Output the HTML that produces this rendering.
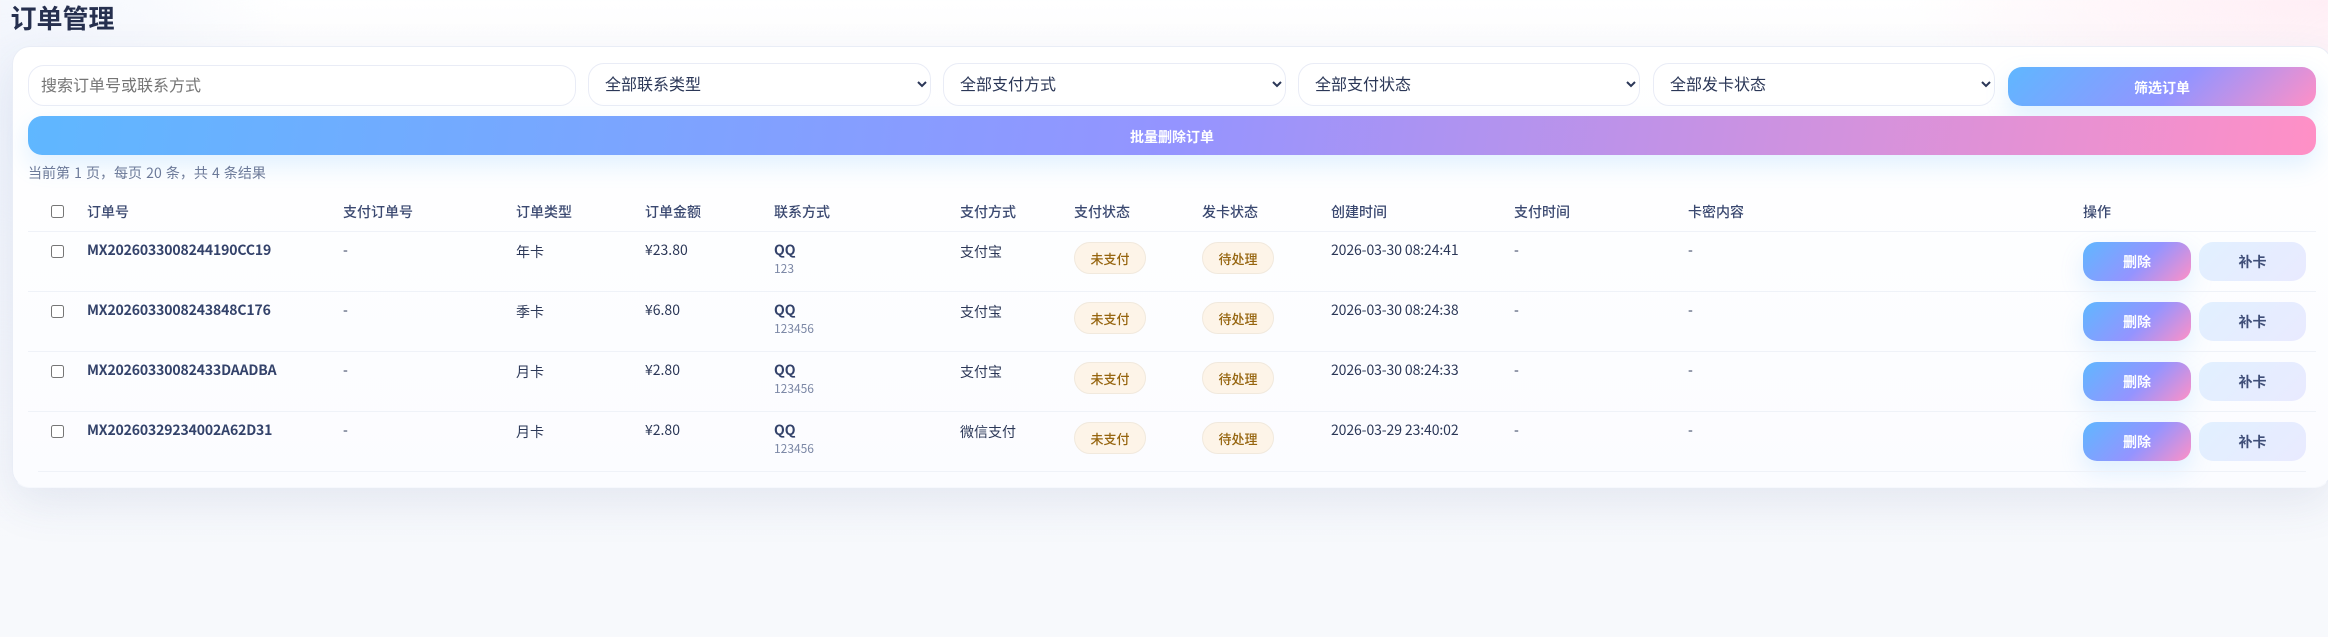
<!DOCTYPE html>
<html lang="zh-CN"><head><meta charset="utf-8"><title>订单管理</title>
<style>
*{box-sizing:border-box}
html,body{margin:0;padding:0;width:2328px;height:637px;overflow:hidden}
body{position:relative;font-family:"Noto Sans CJK SC","Liberation Sans",sans-serif;font-size:14px;color:#2b3757;
background:radial-gradient(ellipse 420px 130px at 2328px 0,#ffeef5 0,rgba(255,240,246,.6) 50%,rgba(255,255,255,0) 100%),radial-gradient(ellipse 300px 420px at 0 120px,#f0f4fc 0,rgba(240,244,252,0) 100%),linear-gradient(180deg,#fff 0,#fdfdfe 40px,#f8f9fd 300px,#f7f9fc 100%)}
h1{position:absolute;left:10.5px;top:0;margin:0;font-size:26px;line-height:36px;font-weight:700;color:#26304f}
.card{position:absolute;left:11.5px;top:46px;width:2320px;height:442px;border-radius:18px;border:1.5px solid #e9edf6;border-bottom-color:#f6f8fd;background:linear-gradient(180deg,#fff 0,#fbfcff 100%);box-shadow:0 16px 44px rgba(60,80,140,.10)}
.a{position:absolute;white-space:nowrap}
input.s,select{position:absolute;font-family:inherit;font-size:16px;background:#fff;border:1.5px solid #e9ecf6;border-radius:16px;color:#2b3757;outline:none;margin:0}
input.s{left:28px;top:65px;width:548px;height:41px;padding:0 12px 4px}
select{top:63px;height:43px;padding:0 12px 3px}
.g{background:linear-gradient(135deg,#5fb7ff 0,#9494ff 55%,#ff90c6 100%);color:#fff;font-weight:700;text-align:center;border-radius:14px;box-shadow:0 10px 24px rgba(90,175,255,.18)}
.b1{left:2008px;top:67px;width:308px;height:39px;line-height:42px}
.b2{left:28px;top:116px;width:2288px;height:39px;line-height:42px;background:linear-gradient(100deg,#5fb7ff 0,#9494ff 50%,#ff90c6 100%)}
.st{left:28px;top:163px;line-height:20px;color:#6c7a99;word-spacing:1px}
.th{top:202px;line-height:20px;font-weight:500;color:#3a4870}
.l{left:28px;width:2288px;height:1.5px;background:#eff2f8}
.c{position:absolute;margin:0;width:13px;height:13px;left:51px}
.o{left:87px;font-weight:700;color:#33426a;line-height:20px;letter-spacing:-.14px}
.d{line-height:20px;color:#2b3757}
.t{letter-spacing:-.1px}
.q{left:774px;font-weight:700;line-height:20px;color:#33426a}
.n{left:774px;font-size:12px;line-height:16px;color:#7c88a6}
.bd{width:72px;height:32px;line-height:32px;border:1.5px solid #f1e9dd;border-radius:16px;background:#fdf4e8;color:#96650f;font-size:13px;font-weight:500;text-align:center}
.del{left:2083px;width:108px;height:39px;line-height:41px;font-size:14px;background:linear-gradient(135deg,#5fb7ff 0,#9494ff 55%,#ff90c6 100%)}
.re{left:2199px;width:107px;height:39px;line-height:41px;border-radius:14px;text-align:center;font-weight:700;color:#3f4e78;background:linear-gradient(135deg,#e1f0ff 0,#e9eaff 100%)}
</style></head><body>
<h1>订单管理</h1>
<div class="card"></div>
<input class="s" placeholder="搜索订单号或联系方式">
<select style="left:588px;width:343px"><option>全部联系类型</option></select>
<select style="left:943px;width:343px"><option>全部支付方式</option></select>
<select style="left:1298px;width:342px"><option>全部支付状态</option></select>
<select style="left:1653px;width:342px"><option>全部发卡状态</option></select>
<div class="a g b1">筛选订单</div>
<div class="a g b2">批量删除订单</div>
<div class="a st">当前第 1 页，每页 20 条，共 4 条结果</div>

<input type="checkbox" class="c" style="top:205px">
<div class="a th" style="left:87px">订单号</div>
<div class="a th" style="left:343px">支付订单号</div>
<div class="a th" style="left:516px">订单类型</div>
<div class="a th" style="left:645px">订单金额</div>
<div class="a th" style="left:774px">联系方式</div>
<div class="a th" style="left:960px">支付方式</div>
<div class="a th" style="left:1074px">支付状态</div>
<div class="a th" style="left:1202px">发卡状态</div>
<div class="a th" style="left:1331px">创建时间</div>
<div class="a th" style="left:1514px">支付时间</div>
<div class="a th" style="left:1688px">卡密内容</div>
<div class="a th" style="left:2083px">操作</div>
<div class="a l" style="top:230.5px"></div>

<input type="checkbox" class="c" style="top:245px">
<div class="a o" style="top:240px">MX2026033008244190CC19</div>
<div class="a d" style="left:343px;top:240px">-</div>
<div class="a d" style="left:516px;top:242px">年卡</div>
<div class="a d" style="left:645px;top:240px">¥23.80</div>
<div class="a q" style="top:240px">QQ</div>
<div class="a n" style="top:261px">123</div>
<div class="a d" style="left:960px;top:242px">支付宝</div>
<div class="a bd" style="left:1074px;top:242px">未支付</div>
<div class="a bd" style="left:1202px;top:242px">待处理</div>
<div class="a d t" style="left:1331px;top:240px">2026-03-30 08:24:41</div>
<div class="a d" style="left:1514px;top:240px">-</div>
<div class="a d" style="left:1688px;top:240px">-</div>
<div class="a g del" style="top:242px">删除</div>
<div class="a re" style="top:242px">补卡</div>
<div class="a l" style="top:290.5px"></div>

<input type="checkbox" class="c" style="top:305px">
<div class="a o" style="top:300px">MX2026033008243848C176</div>
<div class="a d" style="left:343px;top:300px">-</div>
<div class="a d" style="left:516px;top:302px">季卡</div>
<div class="a d" style="left:645px;top:300px">¥6.80</div>
<div class="a q" style="top:300px">QQ</div>
<div class="a n" style="top:321px">123456</div>
<div class="a d" style="left:960px;top:302px">支付宝</div>
<div class="a bd" style="left:1074px;top:302px">未支付</div>
<div class="a bd" style="left:1202px;top:302px">待处理</div>
<div class="a d t" style="left:1331px;top:300px">2026-03-30 08:24:38</div>
<div class="a d" style="left:1514px;top:300px">-</div>
<div class="a d" style="left:1688px;top:300px">-</div>
<div class="a g del" style="top:302px">删除</div>
<div class="a re" style="top:302px">补卡</div>
<div class="a l" style="top:350.5px"></div>

<input type="checkbox" class="c" style="top:365px">
<div class="a o" style="top:360px">MX20260330082433DAADBA</div>
<div class="a d" style="left:343px;top:360px">-</div>
<div class="a d" style="left:516px;top:362px">月卡</div>
<div class="a d" style="left:645px;top:360px">¥2.80</div>
<div class="a q" style="top:360px">QQ</div>
<div class="a n" style="top:381px">123456</div>
<div class="a d" style="left:960px;top:362px">支付宝</div>
<div class="a bd" style="left:1074px;top:362px">未支付</div>
<div class="a bd" style="left:1202px;top:362px">待处理</div>
<div class="a d t" style="left:1331px;top:360px">2026-03-30 08:24:33</div>
<div class="a d" style="left:1514px;top:360px">-</div>
<div class="a d" style="left:1688px;top:360px">-</div>
<div class="a g del" style="top:362px">删除</div>
<div class="a re" style="top:362px">补卡</div>
<div class="a l" style="top:410.5px"></div>

<input type="checkbox" class="c" style="top:425px">
<div class="a o" style="top:420px">MX20260329234002A62D31</div>
<div class="a d" style="left:343px;top:420px">-</div>
<div class="a d" style="left:516px;top:422px">月卡</div>
<div class="a d" style="left:645px;top:420px">¥2.80</div>
<div class="a q" style="top:420px">QQ</div>
<div class="a n" style="top:441px">123456</div>
<div class="a d" style="left:960px;top:422px">微信支付</div>
<div class="a bd" style="left:1074px;top:422px">未支付</div>
<div class="a bd" style="left:1202px;top:422px">待处理</div>
<div class="a d t" style="left:1331px;top:420px">2026-03-29 23:40:02</div>
<div class="a d" style="left:1514px;top:420px">-</div>
<div class="a d" style="left:1688px;top:420px">-</div>
<div class="a g del" style="top:422px">删除</div>
<div class="a re" style="top:422px">补卡</div>
<div class="a l" style="top:470.5px;left:38px;width:2268px"></div>
</body></html>
